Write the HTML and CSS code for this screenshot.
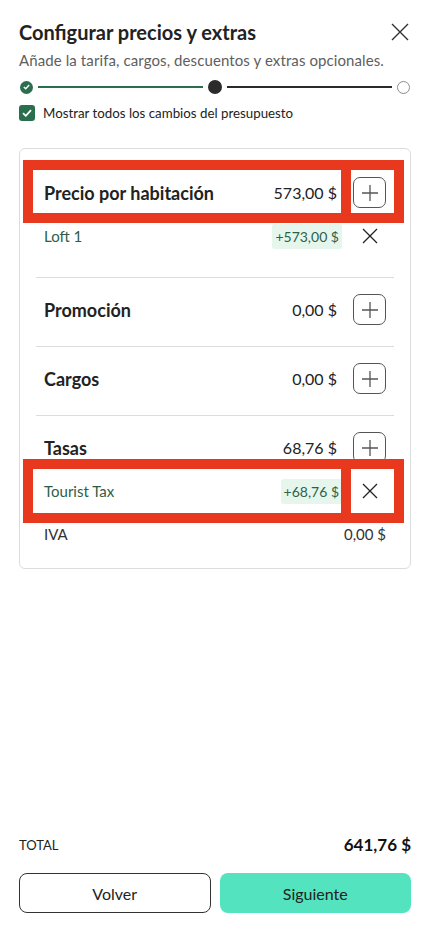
FILE: index.html
```html
<!DOCTYPE html>
<html lang="es">
<head>
    <meta charset="UTF-8" />
    <meta name="viewport" content="width=device-width, initial-scale=1.0"/>
    <title>Configurar precios y extras</title>
    <link rel="stylesheet" href="styles.css">
</head>
<body>
    <div class="panel">
        <header class="panel-head">
            <div class="title-row">
                <h1 class="title">Configurar precios y extras</h1>
                <button class="close-btn" aria-label="Cerrar">
                    <svg width="18" height="18" viewBox="0 0 18 18"><path d="M1 1L17 17M17 1L1 17" stroke="#333" stroke-width="1.4" fill="none"/></svg>
                </button>
            </div>
            <p class="subtitle">Añade la tarifa, cargos, descuentos y extras opcionales.</p>

            <div class="stepper">
                <span class="step step-done">
                    <svg width="7" height="6" viewBox="0 0 7 6"><path d="M0.8 3.1L2.7 4.8L6.2 1" stroke="#fff" stroke-width="1.4" fill="none"/></svg>
                </span>
                <span class="step-line line-done"></span>
                <span class="step step-current"></span>
                <span class="step-line line-todo"></span>
                <span class="step step-todo"></span>
            </div>

            <label class="show-all">
                <span class="checkbox">
                    <svg width="10" height="8" viewBox="0 0 10 8"><path d="M1 4.2L3.8 6.8L9 1.2" stroke="#fff" stroke-width="1.8" fill="none"/></svg>
                </span>
                Mostrar todos los cambios del presupuesto
            </label>
        </header>

        <div class="card">
            <section class="price-group first">
                <div class="group-row">
                    <span class="group-name">Precio por habitación</span>
                    <span class="group-amount">573,00 $</span>
                    <button class="icon-btn add-btn" aria-label="Añadir">
                        <svg width="18" height="18" viewBox="0 0 18 18"><path d="M9 1V17M1 9H17" stroke="#555" stroke-width="1.3" fill="none"/></svg>
                    </button>
                </div>
                <div class="item-row">
                    <span class="item-name">Loft 1</span>
                    <span class="item-amount">+573,00 $</span>
                    <button class="icon-btn remove-btn" aria-label="Quitar">
                        <svg width="16" height="16" viewBox="0 0 16 16"><path d="M1 1L15 15M15 1L1 15" stroke="#222" stroke-width="1.3" fill="none"/></svg>
                    </button>
                </div>
            </section>

            <section class="price-group">
                <div class="group-row">
                    <span class="group-name">Promoción</span>
                    <span class="group-amount">0,00 $</span>
                    <button class="icon-btn add-btn" aria-label="Añadir">
                        <svg width="18" height="18" viewBox="0 0 18 18"><path d="M9 1V17M1 9H17" stroke="#555" stroke-width="1.3" fill="none"/></svg>
                    </button>
                </div>
            </section>

            <section class="price-group">
                <div class="group-row">
                    <span class="group-name">Cargos</span>
                    <span class="group-amount">0,00 $</span>
                    <button class="icon-btn add-btn" aria-label="Añadir">
                        <svg width="18" height="18" viewBox="0 0 18 18"><path d="M9 1V17M1 9H17" stroke="#555" stroke-width="1.3" fill="none"/></svg>
                    </button>
                </div>
            </section>

            <section class="price-group last">
                <div class="group-row">
                    <span class="group-name">Tasas</span>
                    <span class="group-amount">68,76 $</span>
                    <button class="icon-btn add-btn" aria-label="Añadir">
                        <svg width="18" height="18" viewBox="0 0 18 18"><path d="M9 1V17M1 9H17" stroke="#555" stroke-width="1.3" fill="none"/></svg>
                    </button>
                </div>
                <div class="item-row">
                    <span class="item-name">Tourist Tax</span>
                    <span class="item-amount">+68,76 $</span>
                    <button class="icon-btn remove-btn" aria-label="Quitar">
                        <svg width="16" height="16" viewBox="0 0 16 16"><path d="M1 1L15 15M15 1L1 15" stroke="#222" stroke-width="1.3" fill="none"/></svg>
                    </button>
                </div>
                <div class="tax-row">
                    <span>IVA</span>
                    <span>0,00 $</span>
                </div>
            </section>
        </div>

        <footer class="panel-foot">
            <div class="total-row">
                <span class="total-label">TOTAL</span>
                <span class="total-amount">641,76 $</span>
            </div>
            <div class="actions">
                <button class="btn btn-back">Volver</button>
                <button class="btn btn-next">Siguiente</button>
            </div>
        </footer>
    </div>

    <!-- review highlights drawn over the screenshot -->
    <div class="mark mark-a1"></div>
    <div class="mark mark-a2"></div>
    <div class="mark mark-b1"></div>
    <div class="mark mark-b2"></div>
</body>
</html>
```

FILE: styles.css
```css
* {
    box-sizing: border-box;
}

body {
    margin: 0;
    font-family: Lato, 'Open Sans', sans-serif;
    background: #fff;
    color: #222;
}

button {
    font-family: inherit;
    background: none;
    border: none;
    padding: 0;
    cursor: pointer;
}

.panel {
    height: 929px;
    padding: 0 21px 0 19px;
    display: flex;
    flex-direction: column;
}

.panel-head {
    padding-top: 19px;
}

.title-row {
    display: flex;
    justify-content: space-between;
    align-items: center;
}

.title {
    margin: 0;
    font-size: 20px;
    font-weight: 700;
    color: #222;
    line-height: 26px;
}

.close-btn {
    width: 18px;
    height: 18px;
    margin-right: 2px;
    display: flex;
}

.subtitle {
    margin: 5px 0 0;
    font-size: 15px;
    line-height: 20px;
    letter-spacing: 0.1px;
    color: #5e5e5e;
}

.stepper {
    display: flex;
    align-items: center;
    margin: 10px 1px 0 1px;
    height: 14px;
}

.step {
    flex: none;
    border-radius: 50%;
    display: flex;
    align-items: center;
    justify-content: center;
}

.step-done {
    width: 13px;
    height: 13px;
    background: #2b6e4d;
}

.step-current {
    width: 14px;
    height: 14px;
    background: #2b2b2b;
}

.step-todo {
    width: 13px;
    height: 13px;
    border: 1.3px solid #8c8c8c;
}

.step-line {
    flex: 1;
    height: 2px;
    margin: 0 5px;
}

.line-done {
    background: #2b6e4d;
}

.line-todo {
    background: #2b2b2b;
}

.show-all {
    display: flex;
    align-items: center;
    gap: 8px;
    margin-top: 11px;
    font-size: 13.3px;
    color: #222;
}

.checkbox {
    width: 16px;
    height: 16px;
    border-radius: 3px;
    background: #2b6e4d;
    display: flex;
    align-items: center;
    justify-content: center;
}

.card {
    margin-top: 27px;
    border: 1px solid #dcdcdc;
    border-radius: 6px;
    padding: 0 16px;
}

.price-group {
    padding: 15px 8px 20px;
    border-bottom: 1px solid #dcdcdc;
}

.price-group.first {
    padding-top: 27px;
    padding-bottom: 23px;
}

.price-group.last {
    border-bottom: none;
    padding-bottom: 16px;
}

.group-row,
.item-row,
.tax-row {
    display: flex;
    align-items: center;
}

.group-row {
    height: 33px;
}

.group-name {
    flex: 1;
    font-size: 18px;
    font-weight: 700;
    color: #222;
}

.group-amount {
    font-size: 16px;
    color: #222;
}

.icon-btn {
    flex: none;
    width: 33px;
    height: 31px;
    margin-left: 16px;
    display: flex;
    align-items: center;
    justify-content: center;
}

.add-btn {
    border: 1px solid #555;
    border-radius: 7px;
}

.remove-btn {
    margin-left: 11px;
}

.item-row {
    height: 36px;
    margin-top: 9px;
}

.item-name {
    flex: 1;
    font-size: 15px;
    color: #2d5e47;
}

.item-amount {
    font-size: 14px;
    color: #2d6249;
    background: #e6f6ec;
    border-radius: 3px;
    padding: 4px 3px;
}

.tax-row {
    height: 36px;
    margin-top: 7px;
    justify-content: space-between;
    font-size: 15px;
    color: #333;
}

.panel-foot {
    margin-top: auto;
    padding-bottom: 16px;
}

.total-row {
    display: flex;
    justify-content: space-between;
    align-items: center;
}

.total-label {
    font-size: 13px;
    color: #222;
}

.total-amount {
    font-size: 17px;
    font-weight: 700;
    color: #111;
}

.actions {
    display: grid;
    grid-template-columns: 1fr 1fr;
    gap: 9px;
    margin-top: 18px;
}

.btn {
    height: 40px;
    border-radius: 8px;
    font-size: 16px;
    color: #222;
}

.btn-back {
    border: 1px solid #333;
    background: #fff;
}

.btn-next {
    background: #53e4bf;
}

.mark {
    position: absolute;
    border: 10px solid #e8391f;
}

.mark-a1 {
    left: 23px;
    top: 160px;
    width: 328px;
    height: 63px;
}

.mark-a2 {
    left: 341px;
    top: 160px;
    width: 63px;
    height: 63px;
}

.mark-b1 {
    left: 23px;
    top: 459px;
    width: 328px;
    height: 64px;
}

.mark-b2 {
    left: 341px;
    top: 459px;
    width: 63px;
    height: 64px;
}
```
